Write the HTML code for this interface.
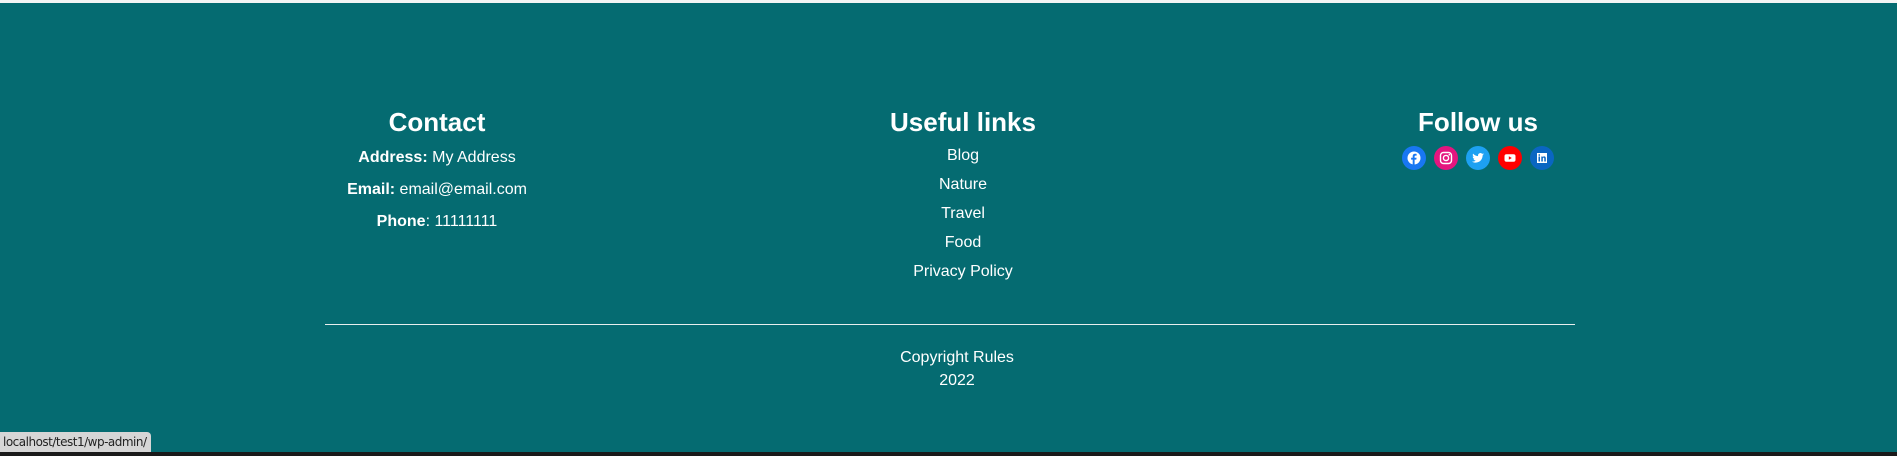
<!DOCTYPE html>
<html><head><meta charset="utf-8"><style>
*{margin:0;padding:0;box-sizing:border-box}
body{width:1897px;height:456px;background:#056b71;position:relative;overflow:hidden;font-family:"Liberation Sans",Arial,sans-serif;color:#fff}
.top{position:absolute;left:0;top:0;width:100%;height:3px;background:#f4f4f4}
.bot{position:absolute;left:0;top:452px;width:100%;height:4px;background:#1a1a1a}
.c{position:absolute;transform:translateX(-50%);white-space:nowrap;text-align:center}
h2{font-size:26px;font-weight:bold;line-height:1}
.t{font-size:16px;line-height:19px}
.line{position:absolute;left:325px;width:1250px;top:324px;height:1px;background:#e8eeee}
.ic{position:absolute;top:146px;width:24px;height:24px;border-radius:50%}
.ic svg{position:absolute;left:5px;top:5px;width:14px;height:14px}
.status{position:absolute;left:0;top:432px;width:151px;height:20px;background:#d6d6d6;border-top-right-radius:4px;color:#222;font-size:12px;line-height:20px;padding-left:3px;font-family:"DejaVu Sans","Liberation Sans",sans-serif;letter-spacing:-0.5px;white-space:nowrap;overflow:hidden}
</style></head><body>
<div class="top"></div>
<h2 class="c" style="left:437px;top:109px">Contact</h2>
<div class="c t" style="left:437px;top:148px"><b>Address:</b> My Address</div>
<div class="c t" style="left:437px;top:180px"><b>Email:</b> email@email.com</div>
<div class="c t" style="left:437px;top:212px"><b>Phone</b>: 11111111</div>

<h2 class="c" style="left:963px;top:109px">Useful links</h2>
<div class="c t" style="left:963px;top:146px">Blog</div>
<div class="c t" style="left:963px;top:175px">Nature</div>
<div class="c t" style="left:963px;top:204px">Travel</div>
<div class="c t" style="left:963px;top:233px">Food</div>
<div class="c t" style="left:963px;top:262px">Privacy Policy</div>

<h2 class="c" style="left:1478px;top:109px">Follow us</h2>
<div class="ic" style="left:1402px;background:#1877f2"><svg viewBox="0 0 14 14"><circle cx="7" cy="7" r="6.5" fill="#fff"/><path d="M7.6 14V8.6h1.7l.3-1.9H7.6V5.5c0-.6.2-.9 1-.9h1V2.9c-.3 0-.9-.1-1.5-.1-1.5 0-2.4.9-2.4 2.5v1.4H4.1v1.9h1.6V14z" fill="#1877f2"/></svg></div>
<div class="ic" style="left:1434px;background:#e4157f"><svg viewBox="0 0 14 14"><rect x="1.5" y="1.5" width="11" height="11" rx="3" fill="none" stroke="#fff" stroke-width="1.4"/><circle cx="7" cy="7" r="2.6" fill="none" stroke="#fff" stroke-width="1.4"/><circle cx="10.3" cy="3.7" r=".8" fill="#fff"/></svg></div>
<div class="ic" style="left:1466px;background:#1da1f2"><svg viewBox="0 0 14 14"><path d="M13 3.2c-.4.2-.9.3-1.4.4.5-.3.9-.8 1.1-1.3-.5.3-1 .5-1.5.6a2.4 2.4 0 0 0-4.1 2.2C5.1 5 3.3 4 2.1 2.6c-.7 1.1-.3 2.5.7 3.2-.4 0-.8-.1-1.1-.3 0 1.2.8 2.200 1.9 2.4-.4.1-.7.1-1.100 0 .3 1 1.2 1.7 2.3 1.7A4.8 4.8 0 0 1 1 10.6c1.1.7 2.3 1 3.7 1 4.5 0 7-3.8 6.9-7.2.5-.3.9-.7 1.4-1.2z" fill="#fff"/></svg></div>
<div class="ic" style="left:1498px;background:#f00"><svg viewBox="0 0 14 14"><rect x="1.5" y="3.2" width="11" height="7.6" rx="2" fill="#fff"/><path d="M5.8 5.2v3.6L8.8 7z" fill="#f00"/></svg></div>
<div class="ic" style="left:1530px;background:#0a66c2"><svg viewBox="0 0 14 14"><rect x="2" y="2" width="10" height="10" fill="#fff"/><rect x="3.5" y="5.5" width="1.5" height="5" fill="#0a66c2"/><circle cx="4.25" cy="4" r=".85" fill="#0a66c2"/><path d="M6.3 5.5h1.4v.7c.3-.5.8-.8 1.5-.8 1.1 0 1.6.7 1.6 1.9v3.2H9.3V7.6c0-.6-.2-1-.7-1s-.8.4-.8 1v2.9H6.3z" fill="#0a66c2"/></svg></div>

<div class="line"></div>
<div class="c t" style="left:957px;top:348px">Copyright Rules</div>
<div class="c t" style="left:957px;top:371px">2022</div>
<div class="status">localhost/test1/wp-admin/</div>
<div class="bot"></div>
</body></html>
